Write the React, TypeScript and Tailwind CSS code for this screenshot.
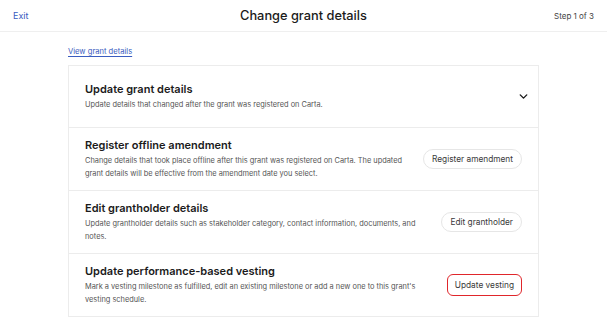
import { ChevronDown } from 'lucide-react';

type Row = {
  title: string;
  description: string;
  action?: string;
  highlighted?: boolean;
};

const rows: Row[] = [
  {
    title: 'Update grant details',
    description: 'Update details that changed after the grant was registered on Carta.',
  },
  {
    title: 'Register offline amendment',
    description:
      'Change details that took place offline after this grant was registered on Carta. The updated grant details will be effective from the amendment date you select.',
    action: 'Register amendment',
  },
  {
    title: 'Edit grantholder details',
    description:
      'Update grantholder details such as stakeholder category, contact information, documents, and notes.',
    action: 'Edit grantholder',
  },
  {
    title: 'Update performance-based vesting',
    description:
      "Mark a vesting milestone as fulfilled, edit an existing milestone or add a new one to this grant's vesting schedule.",
    action: 'Update vesting',
    highlighted: true,
  },
];

export default function App() {
  return (
    <div
      className="h-[321px] w-[607px] overflow-hidden bg-white text-[#1b1b1b]"
      style={{ fontFamily: 'Inter, "Noto Sans", sans-serif' }}
    >
      {/* Top bar */}
      <header className="flex h-[32px] items-center justify-between border-b border-[#efefef] px-[13px]">
        <a className="w-[60px] text-[9px] text-[#3a5cc0]">Exit</a>
        <h1 className="text-[12.8px] font-medium">Change grant details</h1>
        <span className="w-[60px] text-right text-[8px] text-[#444]">Step 1 of 3</span>
      </header>

      <main className="px-[68px] pt-[15px]">
        <a className="block text-[7.6px] leading-[10px] text-[#3a5cc0] underline underline-offset-2">
          View grant details
        </a>

        <div className="mt-[8px] w-[471px] border border-[#ececec]">
          {rows.map((row, i) => (
            <div
              key={row.title}
              className={`flex items-center px-[16px] ${i === 0 ? 'h-[61px]' : 'h-[63px]'} ${
                i > 0 ? 'border-t border-[#ececec]' : ''
              }`}
            >
              <div className="w-[336px]">
                <h2 className="text-[11px] font-semibold leading-[14px]">{row.title}</h2>
                <p className="mt-[3px] text-[7.4px] leading-[12.5px] text-[#555]">{row.description}</p>
              </div>
              <div className="ml-auto flex items-center">
                {row.action ? (
                  <button
                    className={`whitespace-nowrap text-[8.3px] text-[#3a3a3a] ${
                      row.highlighted
                        ? 'h-[22px] rounded-[6px] border-[1.5px] border-[#e0262b] px-[7px]'
                        : 'h-[20px] rounded-full border border-[#e6e6e6] px-[8px]'
                    }`}
                  >
                    {row.action}
                  </button>
                ) : (
                  <ChevronDown className="-mr-[8px] h-[13px] w-[13px]" strokeWidth={2.6} />
                )}
              </div>
            </div>
          ))}
        </div>
      </main>
    </div>
  );
}
